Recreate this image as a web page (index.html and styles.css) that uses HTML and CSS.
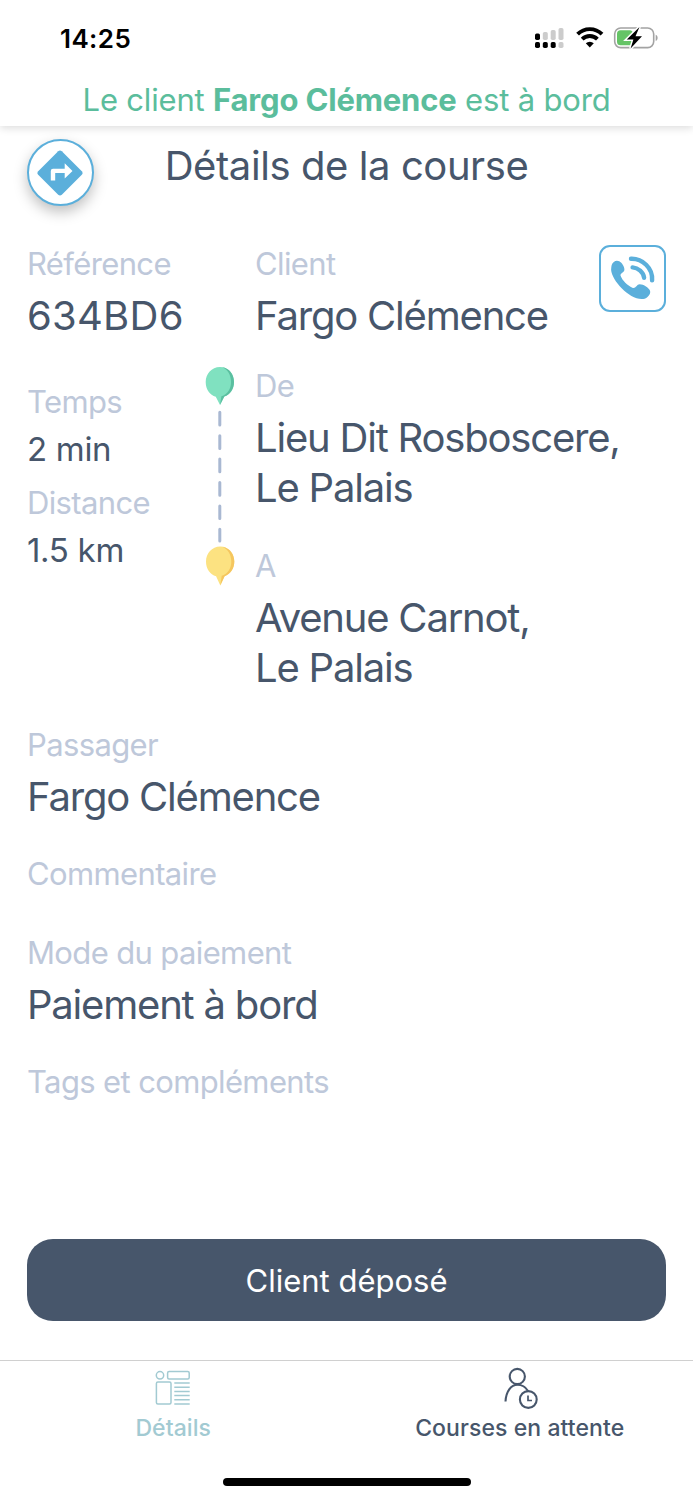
FILE: index.html
```html
<!DOCTYPE html>
<html lang="fr">
<head>
<meta charset="utf-8">
<title>Détails de la course</title>
<link rel="stylesheet" href="styles.css">
</head>
<body>
<div class="screen">
  <div class="status">
    <span class="time">14:25</span>
    <svg class="status-icons" width="124" height="24" viewBox="0 0 124 24">
      <g fill="#000"><rect x="0" y="7.5" width="5" height="6.5" rx="1.7"/><rect x="0" y="16" width="5" height="6" rx="1.7"/><rect x="7.8" y="16" width="5" height="6" rx="1.7"/><rect x="15.7" y="16" width="5" height="6" rx="1.7"/></g>
      <g fill="#ccc"><rect x="7.8" y="6" width="5" height="8" rx="1.7"/><rect x="15.7" y="4" width="5" height="10" rx="1.7"/><rect x="23.5" y="2" width="5" height="12" rx="1.7"/><rect x="23.5" y="16" width="5" height="6" rx="1.7"/></g>
      <g fill="none" stroke="#000" stroke-width="3.9"><path d="M42.6 8.2a17.2 17.2 0 0 1 24.4 0"/><path d="M47.2 13.2a10.8 10.8 0 0 1 15.2 0"/></g>
      <path d="M50.8 17.2a5.9 5.9 0 0 1 8 0L54.8 21.6z"/>
      <rect x="79.7" y="2" width="39" height="19.6" rx="6" fill="none" stroke="#a3a3a3" stroke-width="1.6"/>
      <rect x="82" y="4.3" width="16" height="15" rx="3.5" fill="#65c466"/>
      <path d="M120.7 8.7c2.6 1 2.6 5.2 0 6.2z" fill="#a3a3a3"/>
      <path d="M104.5 1 91.8 13.4h6.6L95.6 22.6 107 10.3h-6.5z" stroke="#fff" stroke-width="3"/>
      <path d="M104.5 1 91.8 13.4h6.6L95.6 22.6 107 10.3h-6.5z"/>
    </svg>
  </div>
  <div class="banner"><span>Le client <b>Fargo Clémence</b> est à bord</span></div>
  <header class="header">
    <button class="nav-button" aria-label="Itinéraire">
      <svg width="46" height="46" viewBox="0 0 46 46"><path fill="#5bafdb" d="M21.2 1.2q1.8-1.6 3.6 0l20 20q1.6 1.8 0 3.6l-20 20q-1.8 1.6-3.6 0l-20-20q-1.6-1.8 0-3.6z"/><path fill="#fff" d="M13.8 30.5V21q0-2.2 2.2-2.2h11.7v-5.5l7.8 7.6-7.8 7.6V23h-9.5v7.5z"/></svg>
    </button>
    <h1 class="title">Détails de la course</h1>
  </header>
  <main class="content">
    <section class="row">
      <div><div class="label ref">Référence</div><div class="value code">634BD6</div></div>
      <div><div class="label">Client</div><div class="value">Fargo Clémence</div></div>
      <button class="call" aria-label="Appeler">
        <svg width="46" height="46" viewBox="0 0 46 46"><path fill="#5bafdb" d="M1.7 9C2.8 5.3 6.5 3.7 9.3 5.3c2.8 1.7 5.1 5.3 5.1 8.1 0 3.4-4.5 3.4-3.8 6.4 1.8 5 6.8 9.5 11.8 12 3.5 1.1 4.1-3.6 7.3-3.6 3.8 0 9.6 3.7 10.4 6.7.7 3.2-2.2 6.5-5.5 7.8C21.3 45.9 1.7 25.1 1.1 13.8q0-2.5.6-4.8z"/><g fill="none" stroke="#5bafdb" stroke-width="4.4" stroke-linecap="round"><path d="M21 2.8C32.2 2.4 43 12 42.1 24.4"/><path d="M22.6 11.4c5.5.4 10.9 4.8 11.5 10.4"/></g></svg>
      </button>
    </section>
    <section class="trip">
      <div class="stats">
        <div class="label">Temps</div><div class="stat min">2 min</div>
        <div class="label dist">Distance</div><div class="stat">1.5 km</div>
      </div>
      <svg class="route" width="30" height="220" viewBox="0 0 30 220">
        <path d="M15 0C23.5 0 29 7 29 15c0 7-4 12.8-9.7 14.6L15 38l-4.2-8.3C4.8 28 .7 22.5.7 15 .7 7 6.5 0 15 0z" fill="#80e1c0"/>
        <path d="M17.3.3C24.5 1.2 29 7.7 29 15c0 7-4 12.8-9.7 14.6L15 38l1.4-8.8C22.5 27.5 26 22 26 15 26 8 22.7 2.5 17.3.3z" fill="#5bbfa0"/>
        <path d="M14.8 45.3v128.7" stroke="#a9b8d2" stroke-width="3" stroke-linecap="round" stroke-dasharray="12.7 10.7"/>
        <g transform="translate(.3 179.6)"><path d="M15 0C23.5 0 29 7 29 15c0 7-4 12.8-9.7 14.6L15 39l-4.2-9.3C4.8 28 .7 22.5.7 15 .7 7 6.5 0 15 0z" fill="#fce281"/><path d="M17.3.3C24.5 1.2 29 7.7 29 15c0 7-4 12.8-9.7 14.6L15 39l1.4-9.8C22.5 27.5 26 22 26 15 26 8 22.7 2.5 17.3.3z" fill="#f5c65f"/></g>
      </svg>
      <div class="places">
        <div><div class="label">De</div><div class="value">Lieu Dit Rosboscere,<br>Le Palais</div></div>
        <div><div class="label">A</div><div class="value">Avenue Carnot,<br>Le Palais</div></div>
      </div>
    </section>
    <section class="passenger"><div class="label">Passager</div><div class="value">Fargo Clémence</div></section>
    <section class="comment"><div class="label">Commentaire</div></section>
    <section class="payment"><div class="label">Mode du paiement</div><div class="value">Paiement à bord</div></section>
    <section class="tags"><div class="label">Tags et compléments</div></section>
    <button class="submit">Client déposé</button>
  </main>
  <nav class="tabs">
    <a class="tab active">
      <svg width="36" height="40" viewBox="0 0 36 40" fill="none" stroke="#a2cad2" stroke-width="1.5"><circle cx="5" cy="6.8" r="3.7"/><rect x="12.6" y="3.1" width="21.6" height="7.4" rx="1.5"/><rect x="1.4" y="13.6" width="14.6" height="22" rx="1.5"/><path d="M19.3 14.5h15.4M19.3 18.7h15.4M19.3 22.9h15.4M19.3 27.1h15.4M19.3 31.3h15.4M19.3 35.5h15.4"/></svg>
      <span>Détails</span>
    </a>
    <a class="tab">
      <svg width="36" height="42" viewBox="0 0 36 42" fill="none" stroke="#47566b" stroke-width="2.1"><circle cx="15.3" cy="9" r="7.6"/><path d="M3.5 34C4 24 9 17.2 15.5 17.2c4.5 0 8 2.2 10.3 6"/><circle cx="26.3" cy="32" r="8.4"/><path d="M26 28v5h4" stroke-width="1.7"/></svg>
      <span>Courses en attente</span>
    </a>
  </nav>
  <div class="home"></div>
</div>
</body>
</html>
```
FILE: styles.css
```css
* { box-sizing: border-box; }
body { margin: 0; background: #fff; color: #47566b; font-family: Inter, "Liberation Sans", sans-serif; }
button { padding: 0; border: 0; font: inherit; }
svg { display: block; flex: none; }
.screen { width: 693px; height: 1500px; display: flex; flex-direction: column; overflow: hidden; }
.status { height: 74px; padding: 25px 34px 0 60px; display: flex; justify-content: space-between; align-items: flex-start; }
.status-icons { margin-top: 1px; }
.time { color: #000; font-size: 26px; font-weight: 600; line-height: 28px; letter-spacing: 0.4px; }
.banner { height: 52px; display: flex; align-items: center; justify-content: center; color: #5bbd9c; font-size: 31px; line-height: 52px; letter-spacing: -0.18px; white-space: nowrap; box-shadow: 0 2px 8px rgba(0,0,0,.14); clip-path: inset(0 0 -14px 0); }
.banner b { font-weight: 700; }
.header { height: 80px; padding: 13px 27px 0; display: grid; grid-template-columns: 67px 1fr 67px; }
.nav-button { width: 67px; height: 67px; border: 2px solid #5bafdb; border-radius: 50%; background: #fff; box-shadow: 0 6px 14px rgba(0,0,0,.25); display: grid; place-items: center; }
.nav-button svg { margin-right: 1px; }
.title { margin: 0; font-size: 40px; font-weight: 400; line-height: 54px; letter-spacing: -0.42px; text-align: center; white-space: nowrap; }
.content { padding: 38px 27px 0; height: 1154px; display: flex; flex-direction: column; }
.row { height: 122px; display: grid; grid-template-columns: 228px 1fr 67px; align-items: start; }
.label { color: #bec8da; font-size: 31px; line-height: 40px; letter-spacing: -0.63px; white-space: nowrap; }
.value { margin-top: 7px; font-size: 40px; line-height: 49.5px; letter-spacing: -1.2px; white-space: nowrap; }
.code { letter-spacing: 0.25px; }
.call { margin-top: 1px; width: 67px; height: 67px; border: 2px solid #5bafdb; border-radius: 11px; background: #fff; display: grid; place-items: center; }
.trip { height: 359px; display: grid; grid-template-columns: 178px 50px 1fr; }
.stats { padding-top: 16px; }
.route { margin-top: 1px; }
.stat { margin-top: 6px; font-size: 33px; line-height: 42px; letter-spacing: -0.3px; }
.stats .dist { margin-top: 13px; }
.places { display: grid; align-content: start; gap: 34px; }
.passenger { height: 129px; }
.comment { height: 79px; }
.payment { height: 129px; }
.tags { flex: 1; }
.submit { height: 82px; margin-bottom: 39px; flex: none; border-radius: 26px; background: #47566b; color: #fff; font-size: 31px; line-height: 82px; padding-top: 1px; }
.tabs { height: 118px; border-top: 1px solid #d0d0d0; display: grid; grid-template-columns: 1fr 1fr; }
.tab { padding-top: 6px; display: flex; flex-direction: column; align-items: center; font-size: 23px; font-weight: 500; line-height: 34px; letter-spacing: 0.08px; }
.tab svg { height: 43px; margin-bottom: 1px; }
.active { color: #a2cad2; }
.home { width: 248px; height: 8px; border-radius: 4px; background: #000; align-self: center; }
```
